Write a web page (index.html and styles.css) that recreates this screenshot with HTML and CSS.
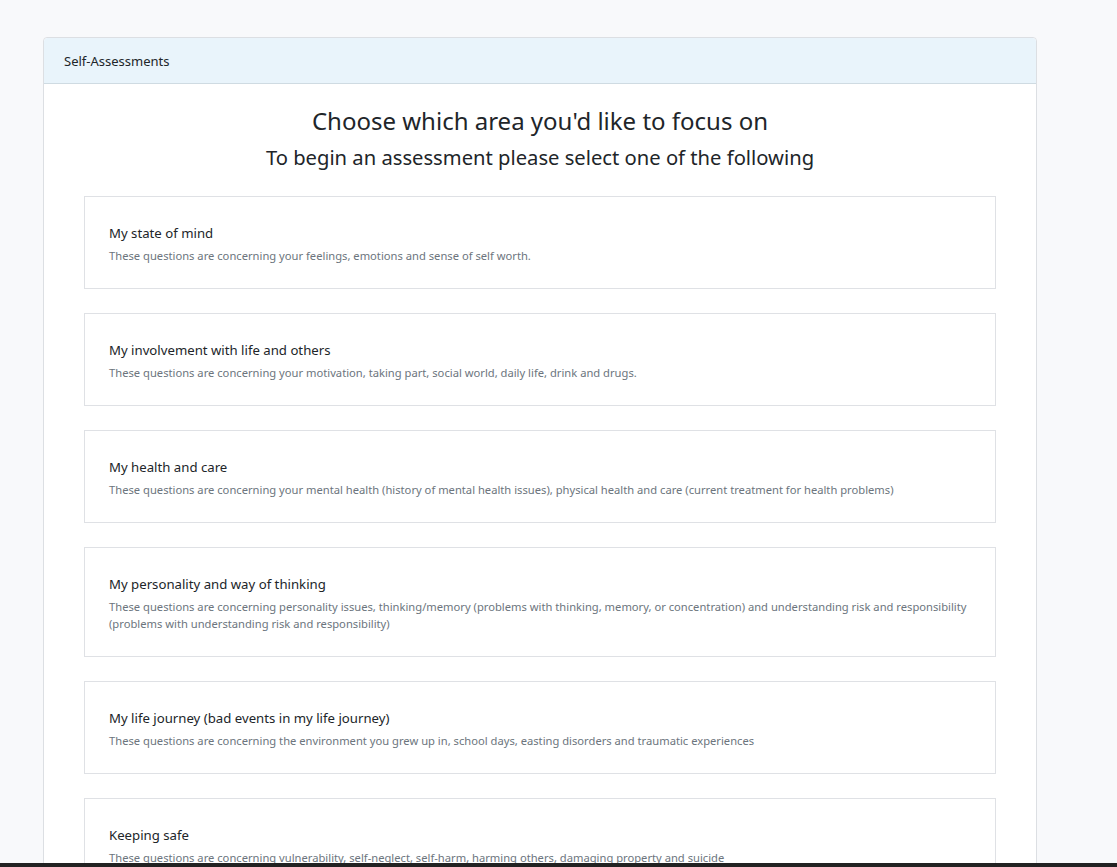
FILE: index.html
```html
<!DOCTYPE html>
<html lang="en">
<head>
<meta charset="utf-8">
<title>Self-Assessments</title>
<link rel="stylesheet" href="styles.css">
</head>
<body>
<main class="page">
  <section class="panel">
    <header class="panel-header">Self-Assessments</header>
    <div class="panel-body">
      <h1 class="heading">Choose which area you'd like to focus on</h1>
      <h2 class="subheading">To begin an assessment please select one of the following</h2>
      <div class="options">
        <a class="option">
          <div class="option-title">My state of mind</div>
          <div class="option-desc">These questions are concerning your feelings, emotions and sense of self worth.</div>
        </a>
        <a class="option">
          <div class="option-title">My involvement with life and others</div>
          <div class="option-desc">These questions are concerning your motivation, taking part, social world, daily life, drink and drugs.</div>
        </a>
        <a class="option">
          <div class="option-title">My health and care</div>
          <div class="option-desc">These questions are concerning your mental health (history of mental health issues), physical health and care (current treatment for health problems)</div>
        </a>
        <a class="option">
          <div class="option-title">My personality and way of thinking</div>
          <div class="option-desc">These questions are concerning personality issues, thinking/memory (problems with thinking, memory, or concentration) and understanding risk and responsibility (problems with understanding risk and responsibility)</div>
        </a>
        <a class="option">
          <div class="option-title">My life journey (bad events in my life journey)</div>
          <div class="option-desc">These questions are concerning the environment you grew up in, school days, easting disorders and traumatic experiences</div>
        </a>
        <a class="option">
          <div class="option-title">Keeping safe</div>
          <div class="option-desc">These questions are concerning vulnerability, self-neglect, self-harm, harming others, damaging property and suicide</div>
        </a>
      </div>
    </div>
  </section>
</main>
<div class="bottom-edge"></div>
</body>
</html>
```

FILE: styles.css
```css
* { box-sizing: border-box; }
html, body { margin: 0; padding: 0; }
body {
  background: #f8f9fb;
  font-family: "Noto Sans", "Open Sans", sans-serif;
  color: #212529;
  overflow: hidden;
  height: 867px;
}
.page {
  padding: 37px 0 0 43px;
}
.panel {
  width: 994px;
  background: #fff;
  border: 1px solid #dcdfe3;
  border-radius: 4px;
}
.panel-header {
  height: 46px;
  display: flex;
  align-items: center;
  padding: 0 20px;
  background: #e9f4fb;
  border-bottom: 1px solid #cfdbe2;
  font-size: 13px;
  border-radius: 4px 4px 0 0;
}
.panel-body {
  padding: 19px 40px 40px;
}
.heading {
  margin: 0;
  text-align: center;
  font-weight: 400;
  font-size: 24px;
  line-height: 36px;
}
.subheading {
  margin: 0 0 21px;
  text-align: center;
  font-weight: 400;
  font-size: 20.2px;
  line-height: 36px;
}
.options {
  display: flex;
  flex-direction: column;
  gap: 24px;
}
.option {
  display: block;
  border: 1px solid #dfe1e5;
  padding: 25px 24px 24px;
  color: #212529;
  text-decoration: none;
}
.option-title {
  font-size: 13.2px;
  line-height: 22px;
  margin-bottom: 3px;
}
.option-desc {
  font-size: 11.2px;
  line-height: 17px;
  color: #6c757d;
}
.bottom-edge {
  position: fixed;
  left: 0;
  right: 0;
  bottom: 0;
  height: 4px;
  background: #222;
}
```
